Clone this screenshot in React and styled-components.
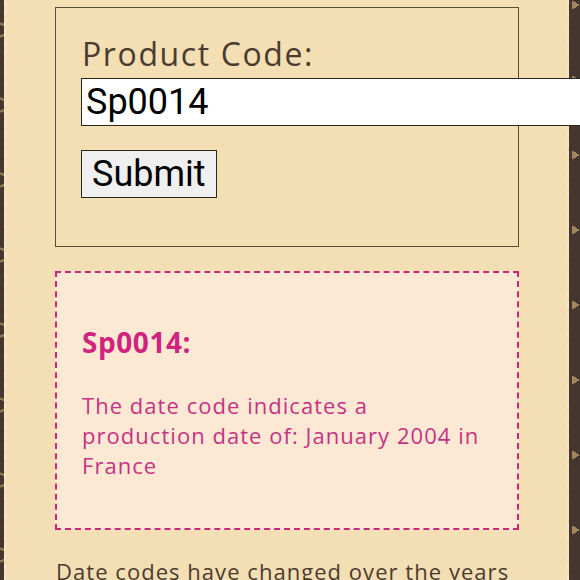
import React from "react";
import styled, { createGlobalStyle } from "styled-components";

const Global = createGlobalStyle`
  html, body {
    margin: 0;
    padding: 0;
    overflow: hidden;
    background: #45372f;
  }
  #root { width: 580px; height: 580px; overflow: hidden; }
`;

const Stage = styled.div`
  width: 580px;
  height: 580px;
  box-sizing: border-box;
  padding: 0 11px 0 4px;
  background-color: #45372f;
  background-image:
    radial-gradient(circle at 0px 30px, transparent 0 5px, #8f7550 5px 7px, transparent 8px),
    conic-gradient(from 240deg at 8px 5px, #a3875a 0 60deg, transparent 60deg);
  background-size: 12px 75px, 8px 75px;
  background-position: 0 0, 572px 0;
  background-repeat: repeat-y, repeat-y;
`;

const Page = styled.main`
  height: 100%;
  box-sizing: border-box;
  background: #f4deb4;
  border-left: 2px dashed #f6e8cf;
  border-right: 2px dashed #f6e8cf;
  padding: 7px 48px 0 49px;
  font-family: "Open Sans", "Lato", sans-serif;
  letter-spacing: 0.065em;
  color: #4a3b2f;
`;

const Form = styled.form`
  display: flex;
  flex-direction: column;
  align-items: flex-start;
  border: 1px solid #5b4a3a;
  padding: 27px 25px 48px 25px;
`;

const Label = styled.label`
  font-size: 32px;
  line-height: 38px;
  letter-spacing: 0.05em;
  margin: 0 0 5px 1px;
  color: #4a3b2f;
`;

const Input = styled.input`
  box-sizing: border-box;
  width: 530px;
  height: 48px;
  margin: 0;
  padding: 1px 4px;
  border: 1px solid #2b2520;
  background: #fff;
  font-family: "Roboto", sans-serif;
  font-size: 36px;
  letter-spacing: 0;
  color: #000;
  outline: none;
`;

const Button = styled.button`
  box-sizing: border-box;
  height: 48px;
  margin-top: 24px;
  padding: 0 10px;
  border: 1px solid #2b2520;
  background: #efefef;
  font-family: "Roboto", sans-serif;
  font-size: 36px;
  letter-spacing: 0;
  color: #000;
`;

const Result = styled.section`
  margin-top: 24px;
  border: 2px dashed #c8287a;
  background: #fde9d3;
  padding: 52px 25px 48px 25px;
  color: #c53285;
`;

const Code = styled.h3`
  margin: 0;
  font-size: 28px;
  line-height: 34px;
  font-weight: 700;
  letter-spacing: 0.02em;
  color: #d0237f;
`;

const Message = styled.p`
  margin: 31px 0 0;
  max-width: 400px;
  font-size: 22px;
  line-height: 30px;
`;

const Note = styled.p`
  margin: 26px 0 0 1px;
  font-size: 22px;
  line-height: 30px;
  white-space: nowrap;
  color: #4a3b2f;
`;

export default function App() {
  return (
    <>
      <Global />
      <Stage>
        <Page>
          <Form onSubmit={(e) => e.preventDefault()}>
            <Label htmlFor="code">Product Code:</Label>
            <Input id="code" defaultValue="Sp0014" />
            <Button type="submit">Submit</Button>
          </Form>
          <Result>
            <Code>Sp0014:</Code>
            <Message>
              The date code indicates a production date of: January 2004 in France
            </Message>
          </Result>
          <Note>Date codes have changed over the years</Note>
        </Page>
      </Stage>
    </>
  );
}
